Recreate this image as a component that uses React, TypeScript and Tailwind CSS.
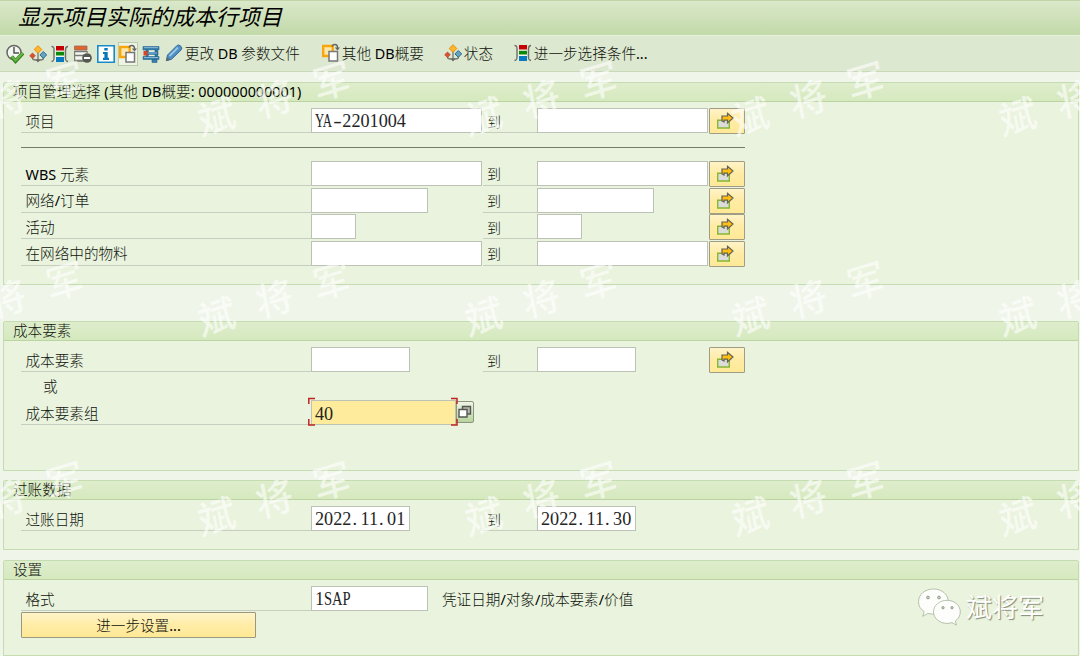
/**
 * Selection screen for the project actual cost line item report: title bar,
 * application toolbar and four grouped panels of selection fields.
 */
import type { ReactNode } from 'react'

const WATERMARK_X = [-267, 0, 267, 534, 801]
const WATERMARK_Y = [0, 200, 400]

export default function App() {
  return (
    <div className="relative flex h-[656px] w-[1080px] flex-col overflow-hidden bg-[#eff5e9] font-['Noto_Sans','Noto_Sans_CJK_SC',sans-serif] text-[#10130d]">
      <header className="flex h-[35px] shrink-0 items-center border-t border-[#c0d4a8] bg-gradient-to-b from-[#dae8c9] to-[#c2d9a9] pl-[18px]">
        <h1 className="-mt-[4px] text-[22px] leading-none font-normal italic text-black">
          显示项目实际的成本行项目
        </h1>
      </header>

      <Toolbar />

      <main className="flex flex-col pt-[10px] pl-[3px]">
        <Panel title="项目管理选择 (其他 DB概要: 000000000001)" className="h-[203px]">
          <RangeRow label="项目" from="w-[171px]" to="w-[171px]" value="YA-2201004" />
          <div className="flex h-[26.4px] items-center">
            <div className="h-px w-[724px] bg-[#747c6c]" />
          </div>
          <RangeRow label="WBS 元素" from="w-[171px]" to="w-[171px]" />
          <RangeRow label="网络/订单" from="w-[117px]" to="w-[117px]" />
          <RangeRow label="活动" from="w-[45px]" to="w-[45px]" />
          <RangeRow label="在网络中的物料" from="w-[171px]" to="w-[171px]" />
        </Panel>

        <Panel title="成本要素" className="mt-[36px] h-[150px]">
          <RangeRow label="成本要素" from="w-[99px]" to="w-[99px]" />
          <div className="flex h-[26.6px] items-center pt-px pl-[22px] text-[14.6px] font-light">或</div>
          <div className="flex h-[26.6px] items-start">
            <Label text="成本要素组" />
            <div className="relative flex">
              <Field width="w-[145px]" value="40" focused />
              <FocusCorners />
            </div>
            <button
              type="button"
              aria-label="value help"
              className="mt-px flex h-[22px] w-[18px] items-center justify-center rounded-r-[2px] border border-[#8d9682] bg-gradient-to-b from-[#eef5e5] to-[#b8d49c]"
            >
              <ValueHelpIcon />
            </button>
          </div>
        </Panel>

        <Panel title="过账数据" className="mt-[9px] h-[70px]">
          <RangeRow
            label="过账日期"
            from="w-[99px]"
            to="w-[99px]"
            value="2022.11.01"
            toValue="2022.11.30"
            multiple={false}
          />
        </Panel>

        <Panel title="设置" className="mt-[10px] h-[96px]">
          <div className="flex h-[26px] items-start">
            <Label text="格式" />
            <Field width="w-[117px]" value="1SAP" />
            <span className="ml-[14px] flex h-[27px] items-center text-[14.6px] font-light">
              <Mixed text="凭证日期/对象/成本要素/价值" />
            </span>
          </div>
          <button
            type="button"
            className="flex h-[26px] w-[235px] items-center justify-center rounded-[1px] border border-[#9b9880] bg-gradient-to-b from-[#fff4c9] via-[#ffeca6] to-[#ffe995] pt-px text-[14.6px] font-light"
          >
            <Mixed text="进一步设置..." />
          </button>
        </Panel>
      </main>

      <Watermark />
      <AccountBadge />
    </div>
  )
}

function Toolbar() {
  return (
    <nav className="flex h-[37px] shrink-0 items-center border-t border-b border-t-[#e9f1df] border-b-[#c9d8b9] bg-[#dde8d0] pl-[6px] text-[14.6px] font-light">
      <IconCell><ExecuteIcon /></IconCell>
      <IconCell><VariantIcon /></IconCell>
      <IconCell><SelectionIcon /></IconCell>
      <IconCell><ExcludeIcon /></IconCell>
      <IconCell><InfoIcon /></IconCell>
      <div className="w-[22.7px] shrink-0">
        <span className="-ml-px flex h-[24px] w-[20px] items-center justify-center border border-[#bccbaa] bg-[#edf3e5]">
          <OverviewIcon />
        </span>
      </div>
      <IconCell><ClampIcon /></IconCell>
      <ToolbarButton width="w-[157px]" label="更改 DB 参数文件"><PencilIcon /></ToolbarButton>
      <ToolbarButton width="w-[122px]" label="其他 DB概要"><OverviewIcon /></ToolbarButton>
      <ToolbarButton width="w-[70px]" label="状态"><VariantIcon /></ToolbarButton>
      <ToolbarButton width="w-[140px]" label="进一步选择条件..."><SelectionIcon /></ToolbarButton>
    </nav>
  )
}

function IconCell({ children }: { children: ReactNode }) {
  return <div className="flex w-[22.7px] shrink-0">{children}</div>
}

interface ToolbarButtonProps {
  width: string
  label: string
  children: ReactNode
}

function ToolbarButton({ width, label, children }: ToolbarButtonProps) {
  return (
    <button type="button" className={`flex shrink-0 items-center gap-[2px] whitespace-nowrap ${width}`}>
      {children}
      <span><Mixed text={label} /></span>
    </button>
  )
}

// Latin runs are darker and slightly smaller than the Chinese around them.
function Mixed({ text }: { text: string }) {
  return (
    <>
      {text.split(/([\x20-\x7e]+)/).map((run, i) =>
        i % 2 === 1 ? (
          <span key={i} className="text-[14.4px] font-normal whitespace-pre text-black">{run}</span>
        ) : (
          run
        )
      )}
    </>
  )
}

interface PanelProps {
  title: string
  className: string
  children: ReactNode
}

function Panel({ title, className, children }: PanelProps) {
  return (
    <section className={`w-[1076px] shrink-0 rounded-t-[2px] border border-[#c5dcb0] bg-[#e9f3dd] ${className}`}>
      <h2 className="flex h-[19px] items-center border-b border-[#bbd4a1] bg-gradient-to-b from-[#deedcc] to-[#d5e9be] pb-px pl-[9px] text-[14.6px] leading-none font-light whitespace-nowrap">
        <span><Mixed text={title} /></span>
      </h2>
      <div className="pt-[6px] pl-[17px]">{children}</div>
    </section>
  )
}

function Label({ text }: { text: string }) {
  return (
    <div className="flex h-[25px] w-[290px] shrink-0 items-center border-b border-[#c7cec0] pt-[3px] pl-[4.5px] text-[14.6px] font-light">
      <span><Mixed text={text} /></span>
    </div>
  )
}

interface RangeRowProps {
  label: string
  from: string
  to: string
  value?: string
  toValue?: string
  multiple?: boolean
}

function RangeRow({ label, from, to, value, toValue, multiple = true }: RangeRowProps) {
  return (
    <div className="flex h-[26.6px] items-start">
      <Label text={label} />
      <div className="flex w-[172px] shrink-0">
        <Field width={from} value={value} />
      </div>
      <div className="flex h-[25px] w-[54px] shrink-0 items-center border-b border-[#c7cec0] pt-[2px] pl-[4px] text-[14px] font-light">
        到
      </div>
      <div className="flex w-[171.5px] shrink-0">
        <Field width={to} value={toValue} />
      </div>
      {multiple && (
        <button
          type="button"
          aria-label="multiple selection"
          className="flex h-[26px] w-[36px] items-center justify-center rounded-[1px] border border-[#a09d87] bg-gradient-to-b from-[#fff3c7] via-[#ffeba4] to-[#ffe997]"
        >
          <MultipleIcon />
        </button>
      )}
    </div>
  )
}

interface FieldProps {
  width: string
  value?: string
  focused?: boolean
}

function Field({ width, value, focused = false }: FieldProps) {
  return (
    <div
      className={`flex h-[25px] shrink-0 items-center border border-[#bcc2b6] pt-[2px] pl-[3px] font-['Liberation_Serif',serif] text-[18.2px] leading-none text-[#24251f] ${width} ${
        focused ? 'bg-[#ffeb9c]' : 'bg-white'
      }`}
    >
      {value && <FixedPitch value={value} />}
    </div>
  )
}

// Half-width cells of 9.1px: digits fit as they are, the rest is fitted.
function FixedPitch({ value }: { value: string }) {
  return (
    <span className="flex">
      {value.split(/([A-Z]+|[.-])/).map((run, i) => {
        if (run === 'YA') return <span key={i} className="w-[18.2px] origin-left scale-x-[0.7]">{run}</span>
        if (run === 'SAP') return <span key={i} className="w-[27.3px] origin-left scale-x-[0.8]"><span className="inline-block w-[34px]">{run}</span></span>
        if (run === '-') return <span key={i} className="w-[9.1px] scale-x-[1.4] text-center">{run}</span>
        if (run === '.') return <span key={i} className="w-[9.1px] pl-px">{run}</span>
        return <span key={i}>{run}</span>
      })}
    </span>
  )
}

function FocusCorners() {
  return (
    <svg className="absolute -top-[3px] -left-[3px] z-10 max-w-none" width="151" height="30" fill="none" stroke="#c02420" strokeWidth="1.5">
      <path d="M7 1.500H.8V7M143 1.500H149V7M.8 22V28H7M149 22V28H143" />
    </svg>
  )
}

function Watermark() {
  return (
    <div aria-hidden="true" className="pointer-events-none absolute inset-0 text-[38px] leading-none font-medium text-white opacity-60">
      {WATERMARK_Y.map((y) =>
        WATERMARK_X.map((x) => (
          <div key={`${x}:${y}`} className="absolute" style={{ left: x + 195, top: y + 79 }}>
            <span className="inline-block w-[159px] -rotate-[17deg] -skew-x-6 tracking-[22px] whitespace-nowrap">
              斌将军
            </span>
          </div>
        ))
      )}
    </div>
  )
}

function AccountBadge() {
  return (
    <div className="absolute top-[587px] left-[917px] flex items-center gap-[5px]">
      <svg width="44" height="39" viewBox="0 0 44 39" fill="#fdfefb" stroke="#a7b29b" strokeWidth=".8">
        <path d="M16.500 2C8 2 1.500 7.500 1.500 14.700c0 4.300 2.200 7.700 5.700 10l-1.500 4.600 5.300-2.900c2 .6 4 .8 6 .8 8-.2 14.300-5.600 14.300-12.500C31.300 7.500 25 2 16.500 2Z" />
        <path d="M30 13.300c-7.300 0-13.500 5-13.500 11.500s6.200 11.600 13.500 11.600c1.700 0 3.400-.3 5-.8l4.500 2.500-1.200-4c3.100-2.200 5-5.500 5-9.300 0-6.500-6-11.500-13.300-11.500Z" />
        <g fill="#c8d2bd" stroke="#87917e">
          <circle cx="11" cy="10.500" r="1.400" /><circle cx="22" cy="10.500" r="1.400" />
          <circle cx="26" cy="20.700" r="1.200" /><circle cx="35" cy="20.700" r="1.200" />
        </g>
      </svg>
      <span className="text-[26px] leading-none font-normal text-white [text-shadow:1px_1px_1px_#7f8b75]">斌将军</span>
    </div>
  )
}

function ExecuteIcon() {
  return (
    <svg width="18" height="20" viewBox="0 0 18 20" fill="none">
      <circle cx="8" cy="8.500" r="7" fill="#f4f6f1" stroke="#666" strokeWidth="1.500" />
      <path d="M8 3v6h5" stroke="#555" strokeWidth="1.500" />
      <path d="m5.500 12.500 4 4.500L17 9" stroke="#397f24" strokeWidth="4" />
      <path d="m5.800 12.500 3.700 4L16.700 9" stroke="#66b746" strokeWidth="2.200" />
    </svg>
  )
}

function VariantIcon() {
  return (
    <svg width="18" height="18" viewBox="0 0 18 18" fill="none">
      <path d="M9 6v10M3.500 11v2q0 2 3 2h5q3 0 3-2v-2" stroke="#75796f" strokeWidth="1.300" />
      <path d="m6.500 14.500 2.500 3 2.500-3" fill="#666" />
      <path d="m9 .7 3.800 3.800L9 8.300 5.200 4.500Z" fill="#ffb52c" stroke="#e98d11" />
      <path d="m3.500 8 2.800 2.800-2.800 2.800L.7 10.800Z" fill="#d75335" stroke="#bb3d23" strokeWidth=".7" />
      <path d="m14.300 6.500 3.400 3.400-3.400 3.400-3.400-3.400Z" fill="#69a2bd" stroke="#286c95" />
    </svg>
  )
}

function SelectionIcon() {
  return (
    <svg width="18" height="18" viewBox="0 0 18 18" fill="none">
      <path d="M.5 1.500C3 1.500 3 3 3 5v8c0 2 0 3-2.500 3.500M17 1.500C14.500 1.500 14.500 3 14.500 5v8c0 2 0 3 2.500 3.500" stroke="#6c6f68" strokeWidth="1.400" />
      <path d="M4.500 1h8.500v16H4.500Z" fill="#f3f5ef" />
      <path d="M5 1h8v4.500H5Z" fill="#c40000" />
      <path d="M5 6.800h8v3.700H5Z" fill="#0b8a08" />
      <path d="M5 12h8v5H5Z" fill="#087ac0" />
    </svg>
  )
}

function ExcludeIcon() {
  return (
    <svg width="18" height="18" viewBox="0 0 18 18" fill="none">
      <path d="M.7 6v10H10M13 6v2" stroke="#777b73" strokeWidth="1.300" />
      <path d="M1.400 6h11v9h-11Z" fill="#f4f6f1" />
      <path d="M.5 1h12.500v4H.5Z" fill="#df642e" stroke="#9b6a55" strokeWidth=".8" />
      <path d="M.7 6.500h12.500M.7 10.500H11M.7 15.500H9" stroke="#777b73" strokeWidth="1.300" />
      <circle cx="13" cy="13" r="4.800" fill="#555852" />
      <path d="M10 12h6v2h-6Z" fill="#fff" />
    </svg>
  )
}

function InfoIcon() {
  return (
    <svg width="18" height="18" viewBox="0 0 18 18">
      <path d="M.8.800h16.400v16.400H.8Z" fill="#fff" stroke="#168bc8" strokeWidth="1.600" />
      <path d="M7.300 3h3.400v2.600H7.300ZM6 7h4.700v5.800H12V15H6v-2.200h1.400V9H6Z" fill="#087ab8" />
    </svg>
  )
}

function OverviewIcon() {
  return (
    <svg width="18" height="20" viewBox="0 0 18 20" fill="none">
      <path d="M1.200 3h9.500v10H1.200Z" fill="#fbe8ae" stroke="#f9a60a" strokeWidth="2.400" />
      <path d="M10 3.500C11 1 15 .8 15.500 4v2" stroke="#666" strokeWidth="1.500" />
      <path d="m12.800 4.500 2.700 3 2.500-3" fill="#666" />
      <path d="M7 8.500h8.500V18H7Z" fill="#fff" stroke="#777" strokeWidth="1.500" />
    </svg>
  )
}

function ClampIcon() {
  return (
    <svg width="18" height="18" viewBox="0 0 18 18" fill="none">
      <path d="M1 1.500h16v3.500H1ZM5 6.500h11v3.500H5ZM1 11.500h16v3H1ZM4 5h2v6.500H4ZM13 5h2.500v6.500H13ZM10 14.500h5v3h-5Z" fill="#397fac" stroke="#27648f" strokeWidth=".6" />
      <path d="M7 5.500h5.500v1.400H7ZM7 9.800h5.500v1.300H7Z" fill="#e7eee0" />
      <path d="M2 2.600h14M6 8h9M2 12.500h14" stroke="#85b7d6" />
      <path d="M1.500 6h4v4.500h-4Z" fill="#d74526" />
    </svg>
  )
}

function PencilIcon() {
  return (
    <svg width="18" height="18" viewBox="0 0 18 18" fill="none">
      <path d="M2.500 11 12 1.500q1.700-1.300 3.700.6t.6 3.700L6.500 15.300l-5.200 1.400Z" fill="#4c8fc2" stroke="#346f9d" />
      <path d="m4.500 12 8.500-8.500" stroke="#9bc4e2" strokeWidth="1.800" />
      <path d="m1 17 1.300-4 2.800 2.800Z" fill="#666" />
    </svg>
  )
}

function MultipleIcon() {
  return (
    <svg className="-ml-[3px]" width="18" height="18" viewBox="0 0 18 18" fill="none">
      <path d="M1.700 8.300h11.600v7.700H1.700Z" fill="#dcddd9" stroke="#86b632" strokeWidth="1.400" />
      <path d="M6 9V4h5.500V1.300L17 6l-5.500 5V8H8v2Z" fill="#ffbe10" stroke="#62615a" strokeWidth="1.200" />
    </svg>
  )
}

function ValueHelpIcon() {
  return (
    <svg width="14" height="14" viewBox="0 0 14 14" stroke="#55584f" strokeWidth="1.400">
      <path d="M4.500 1.500h8V9h-8Z" fill="#b8bab5" />
      <path d="M1 4.500h8V12H1Z" fill="#fff" />
    </svg>
  )
}
